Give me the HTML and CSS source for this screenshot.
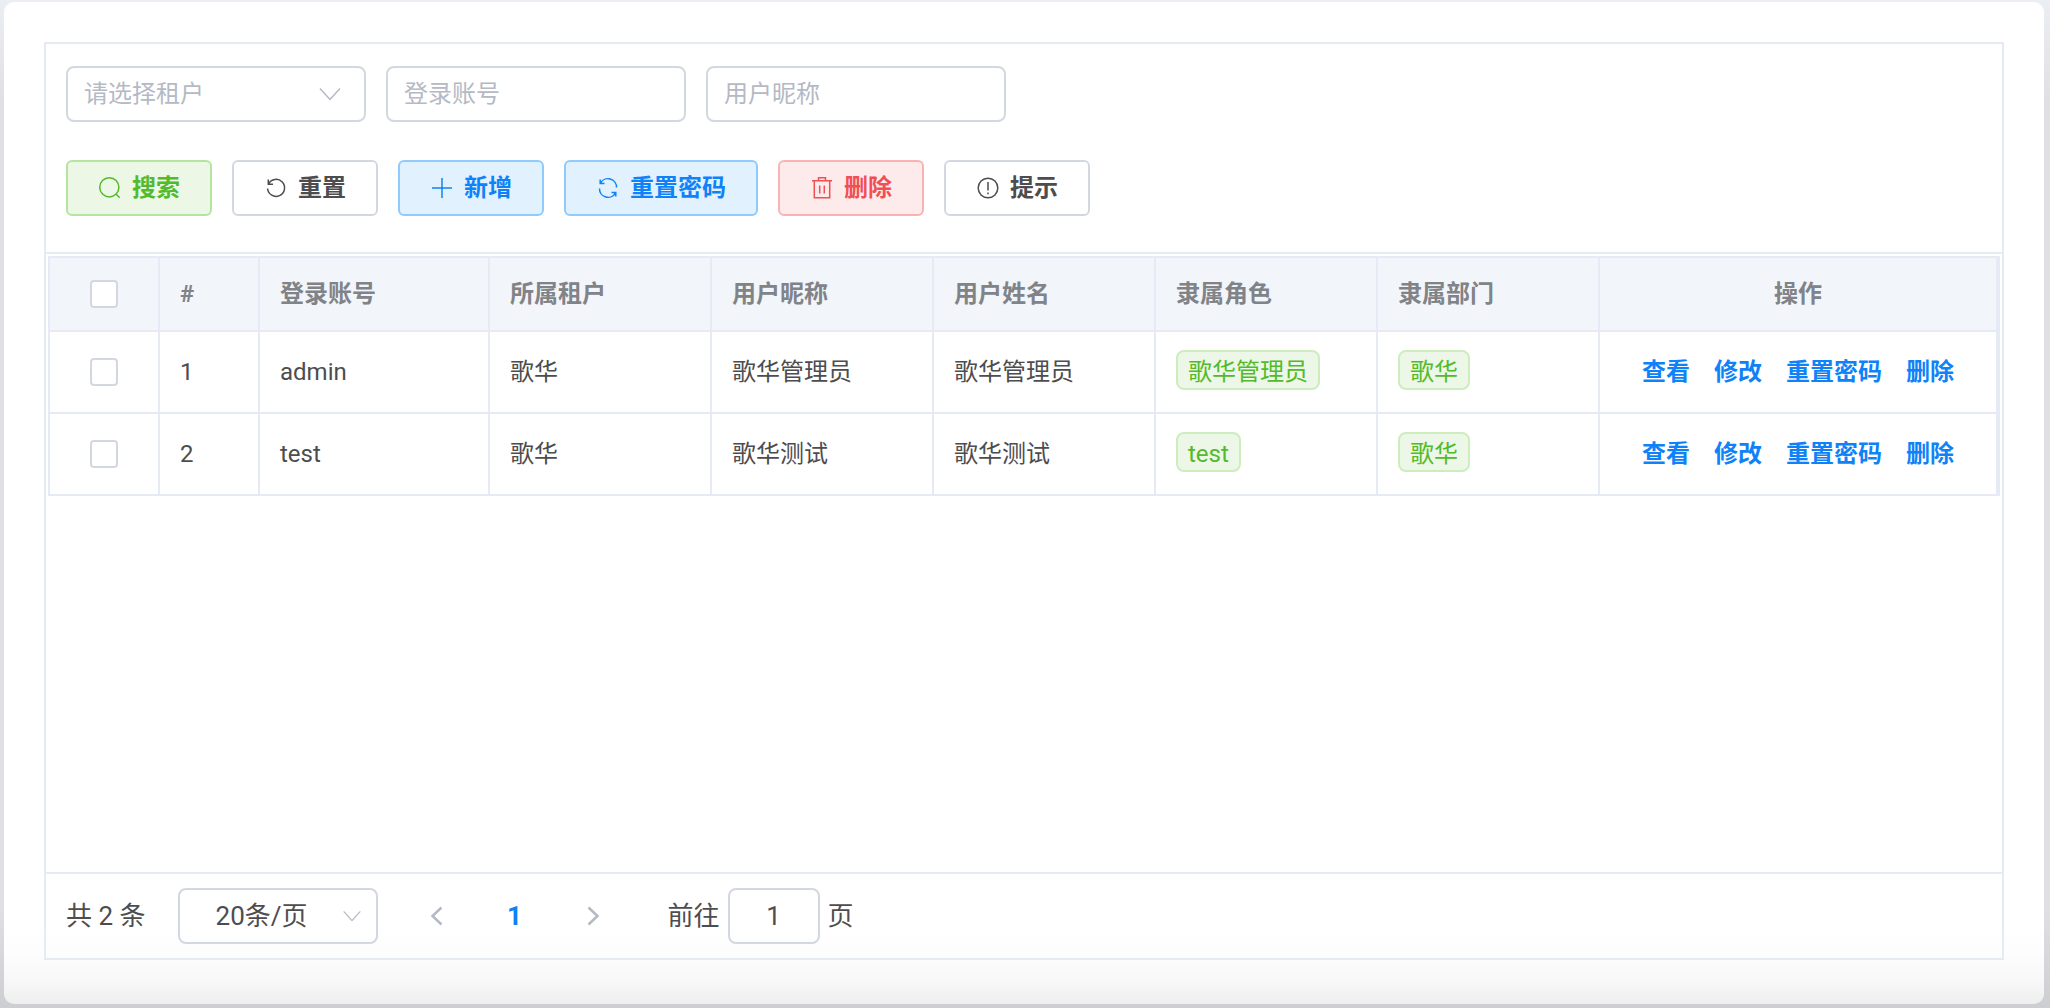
FILE: index.html
```html
<!DOCTYPE html>
<html lang="zh-CN">
<head>
<meta charset="utf-8">
<meta name="viewport" content="width=device-width, initial-scale=1">
<title>用户管理</title>
<link rel="stylesheet" href="styles.css">
</head>
<body>
<main class="card">
  <section class="panel">
    <form class="toolbar" onsubmit="return false">
      <div class="filters">
        <div class="select-box filter">
          <select class="field placeholder" aria-label="租户">
            <option>请选择租户</option>
          </select>
          <svg class="caret" viewBox="0 0 24 24" aria-hidden="true"><path d="M2 6.500 12 17.500 22 6.500"/></svg>
        </div>
        <input class="field filter" type="text" placeholder="登录账号" aria-label="登录账号">
        <input class="field filter" type="text" placeholder="用户昵称" aria-label="用户昵称">
      </div>
      <div class="buttons">
        <button class="btn success" type="submit">
          <svg class="icon" viewBox="0 0 24 24" aria-hidden="true"><circle cx="11.300" cy="11.300" r="9.600"/><path d="M18 18 21.700 21.700"/></svg>搜索
        </button>
        <button class="btn" type="reset">
          <svg class="icon" viewBox="0 0 24 24" aria-hidden="true"><path d="M4.300 3.500V8.200H9M4.500 8A8.500 8.500 0 1 1 3.600 12.500"/></svg>重置
        </button>
        <button class="btn primary" type="button">
          <svg class="icon" viewBox="0 0 24 24" aria-hidden="true"><path d="M12 2V22M2 12H22"/></svg>新增
        </button>
        <button class="btn primary" type="button">
          <svg class="icon" viewBox="0 0 24 24" aria-hidden="true"><path d="M4.200 3.500V7.500H8.500M4.500 7.200A8.500 8.500 0 0 1 20.500 11.500M3.500 12.500A8.500 8.500 0 0 0 19.500 16.800M15.500 16.500H19.800V20.500"/></svg>重置密码
        </button>
        <button class="btn danger" type="button">
          <svg class="icon" viewBox="0 0 24 24" aria-hidden="true"><path d="M2 4.700H22M4.300 4.700V21.800H19.700V4.700M8.500 4.700V1.800H15.500V4.700M9.700 9.500V17.500M14.300 9.500V17.500"/></svg>删除
        </button>
        <button class="btn" type="button">
          <svg class="icon" viewBox="0 0 24 24" aria-hidden="true"><circle cx="12" cy="12" r="9.800"/><path d="M12 6V14.500M12 16.500V18.300"/></svg>提示
        </button>
      </div>
    </form>

    <div class="table-area">
      <table class="grid">
        <colgroup>
          <col class="col-check"><col class="col-index"><col class="col-account">
          <col><col><col><col><col>
          <col class="col-actions">
        </colgroup>
        <thead>
          <tr>
            <th class="center"><input class="check" type="checkbox" aria-label="全选"></th>
            <th>#</th>
            <th>登录账号</th>
            <th>所属租户</th>
            <th>用户昵称</th>
            <th>用户姓名</th>
            <th>隶属角色</th>
            <th>隶属部门</th>
            <th class="center">操作</th>
          </tr>
        </thead>
        <tbody>
          <tr>
            <td class="center"><input class="check" type="checkbox" aria-label="选择 admin"></td>
            <td>1</td>
            <td>admin</td>
            <td>歌华</td>
            <td>歌华管理员</td>
            <td>歌华管理员</td>
            <td><span class="tag">歌华管理员</span></td>
            <td><span class="tag">歌华</span></td>
            <td><div class="actions"><a href="#">查看</a><a href="#">修改</a><a href="#">重置密码</a><a href="#">删除</a></div></td>
          </tr>
          <tr>
            <td class="center"><input class="check" type="checkbox" aria-label="选择 test"></td>
            <td>2</td>
            <td>test</td>
            <td>歌华</td>
            <td>歌华测试</td>
            <td>歌华测试</td>
            <td><span class="tag">test</span></td>
            <td><span class="tag">歌华</span></td>
            <td><div class="actions"><a href="#">查看</a><a href="#">修改</a><a href="#">重置密码</a><a href="#">删除</a></div></td>
          </tr>
        </tbody>
      </table>
    </div>

    <footer class="pagination">
      <span class="total">共 2 条</span>
      <div class="select-box page-size">
        <select class="field" aria-label="每页条数">
          <option>20条/页</option>
        </select>
        <svg class="caret small" viewBox="0 0 24 24" aria-hidden="true"><path d="M2 6.500 12 17.500 22 6.500"/></svg>
      </div>
      <nav class="pager" aria-label="分页">
        <button class="page-btn" type="button" aria-label="上一页"><svg class="chevron" viewBox="0 0 24 24" aria-hidden="true"><path d="M16.500 3.500 7.500 12 16.500 20.500"/></svg></button>
        <button class="page-btn current" type="button" aria-current="page">1</button>
        <button class="page-btn" type="button" aria-label="下一页"><svg class="chevron" viewBox="0 0 24 24" aria-hidden="true"><path d="M7.500 3.500 16.500 12 7.500 20.500"/></svg></button>
      </nav>
      <label class="jump">前往<input class="field" type="text" inputmode="numeric" value="1">页</label>
    </footer>
  </section>
</main>
</body>
</html>
```

FILE: styles.css
```css
:root {
  --line: #e5eaf4;
  --field-line: #d3d7e2;
  --text: #4d4d4f;
  --muted: #b4b9c4;
  --blue: #1082f8;
}

* {
  box-sizing: border-box;
}

body {
  margin: 0;
  min-height: 100vh;
  display: flex;
  padding: 2px 6px 4px 4px;
  background: linear-gradient(#ebeef2, #dfe0e4 10%, #dfe0e4 90%, #cdced2);
  color: var(--text);
  font: 24px/32px Roboto, "Noto Sans CJK SC", sans-serif;
}

.card {
  flex: 1;
  display: flex;
  padding: 40px 40px 44px;
  border-radius: 10px;
  background: linear-gradient(to top, #eeeeee, #f8f8f8 24px, #fdfdfd 52px, #ffffff 80px);
}

.panel {
  flex: 1;
  min-width: 0;
  display: flex;
  flex-direction: column;
  border: 2px solid var(--line);
}

/* Filters and action buttons */
.toolbar {
  display: flex;
  flex-direction: column;
  gap: 38px;
  padding: 22px 20px 36px;
  border-bottom: 2px solid var(--line);
}

.filters,
.buttons {
  display: flex;
  flex-wrap: wrap;
  gap: 20px;
}

.field {
  width: 100%;
  height: 56px;
  margin: 0;
  padding: 0 16px;
  border: 2px solid var(--field-line);
  border-radius: 8px;
  background: transparent;
  color: inherit;
  font: inherit;
  appearance: none;
}

.field::placeholder {
  color: var(--muted);
  opacity: 1;
}

.placeholder {
  color: var(--muted);
}

.filter {
  width: 300px;
}

.select-box {
  position: relative;
}

svg {
  fill: none;
  stroke: currentColor;
  stroke-width: 1.5;
}

.caret {
  position: absolute;
  top: 16px;
  right: 24px;
  width: 24px;
  height: 24px;
  color: var(--muted);
  pointer-events: none;
}

.caret.small {
  top: 18px;
  right: 16px;
  width: 20px;
  height: 20px;
}

.btn {
  display: flex;
  align-items: center;
  gap: 10px;
  height: 56px;
  padding: 0 30px;
  border: 2px solid var(--field-line);
  border-radius: 6px;
  background: #ffffff;
  color: var(--text);
  font: inherit;
  font-weight: 700;
}

.icon {
  width: 24px;
  height: 24px;
}

.btn.success {
  border-color: #b4e49f;
  background: #ecf7e6;
  color: #53bb2b;
}

.btn.primary {
  border-color: #90cbfb;
  background: #e1f1fe;
  color: var(--blue);
}

.btn.danger {
  border-color: #fab3b5;
  background: #fdebec;
  color: #f04f54;
}

/* Data table */
.table-area {
  flex: 1;
  padding: 2px;
}

.grid {
  width: 100%;
  table-layout: fixed;
  border-spacing: 0;
  border: solid var(--line);
  border-width: 2px 2px 0;
}

.col-check { width: 110px; }
.col-index { width: 100px; }
.col-account { width: 230px; }
.col-actions { width: 398px; }

.grid th,
.grid td {
  padding: 0 20px;
  border: solid var(--line);
  border-width: 0 2px 2px 0;
  text-align: left;
}

.grid th {
  height: 74px;
  background: #f2f5fa;
  color: #808387;
  font-weight: 700;
}

.grid td {
  height: 82px;
}

.grid .center {
  text-align: center;
}

.check {
  display: block;
  width: 28px;
  height: 28px;
  margin: 0 auto;
  border: 2px solid var(--field-line);
  border-radius: 4px;
  background: #ffffff;
  appearance: none;
}

.tag {
  display: inline-block;
  height: 40px;
  margin-bottom: 4px;
  padding: 4px 10px 0;
  border: 2px solid #cdedbf;
  border-radius: 8px;
  background: #edf7e7;
  color: #53bb2b;
  vertical-align: top;
}

.actions {
  display: flex;
  justify-content: center;
  gap: 24px;
}

.actions a {
  color: var(--blue);
  font-weight: 700;
  text-decoration: none;
  white-space: nowrap;
}

/* Pagination */
.pagination {
  display: flex;
  align-items: center;
  height: 86px;
  padding: 0 20px;
  border-top: 2px solid var(--line);
  font-size: 26px;
}

.page-size {
  width: 200px;
  margin-left: 32px;
}

.page-size .field {
  padding: 0 36px;
}

.pager {
  display: flex;
  gap: 8px;
  margin: 0 40px 0 24px;
}

.page-btn {
  display: flex;
  align-items: center;
  justify-content: center;
  width: 70px;
  height: 56px;
  padding: 0;
  border: 0;
  background: none;
  color: var(--muted);
  font: inherit;
}

.page-btn.current {
  color: var(--blue);
  font-weight: 700;
}

.chevron {
  width: 24px;
  height: 24px;
  stroke-width: 2.5;
}

.jump {
  display: flex;
  align-items: center;
  gap: 8px;
}

.jump .field {
  width: 92px;
  text-align: center;
}
```
